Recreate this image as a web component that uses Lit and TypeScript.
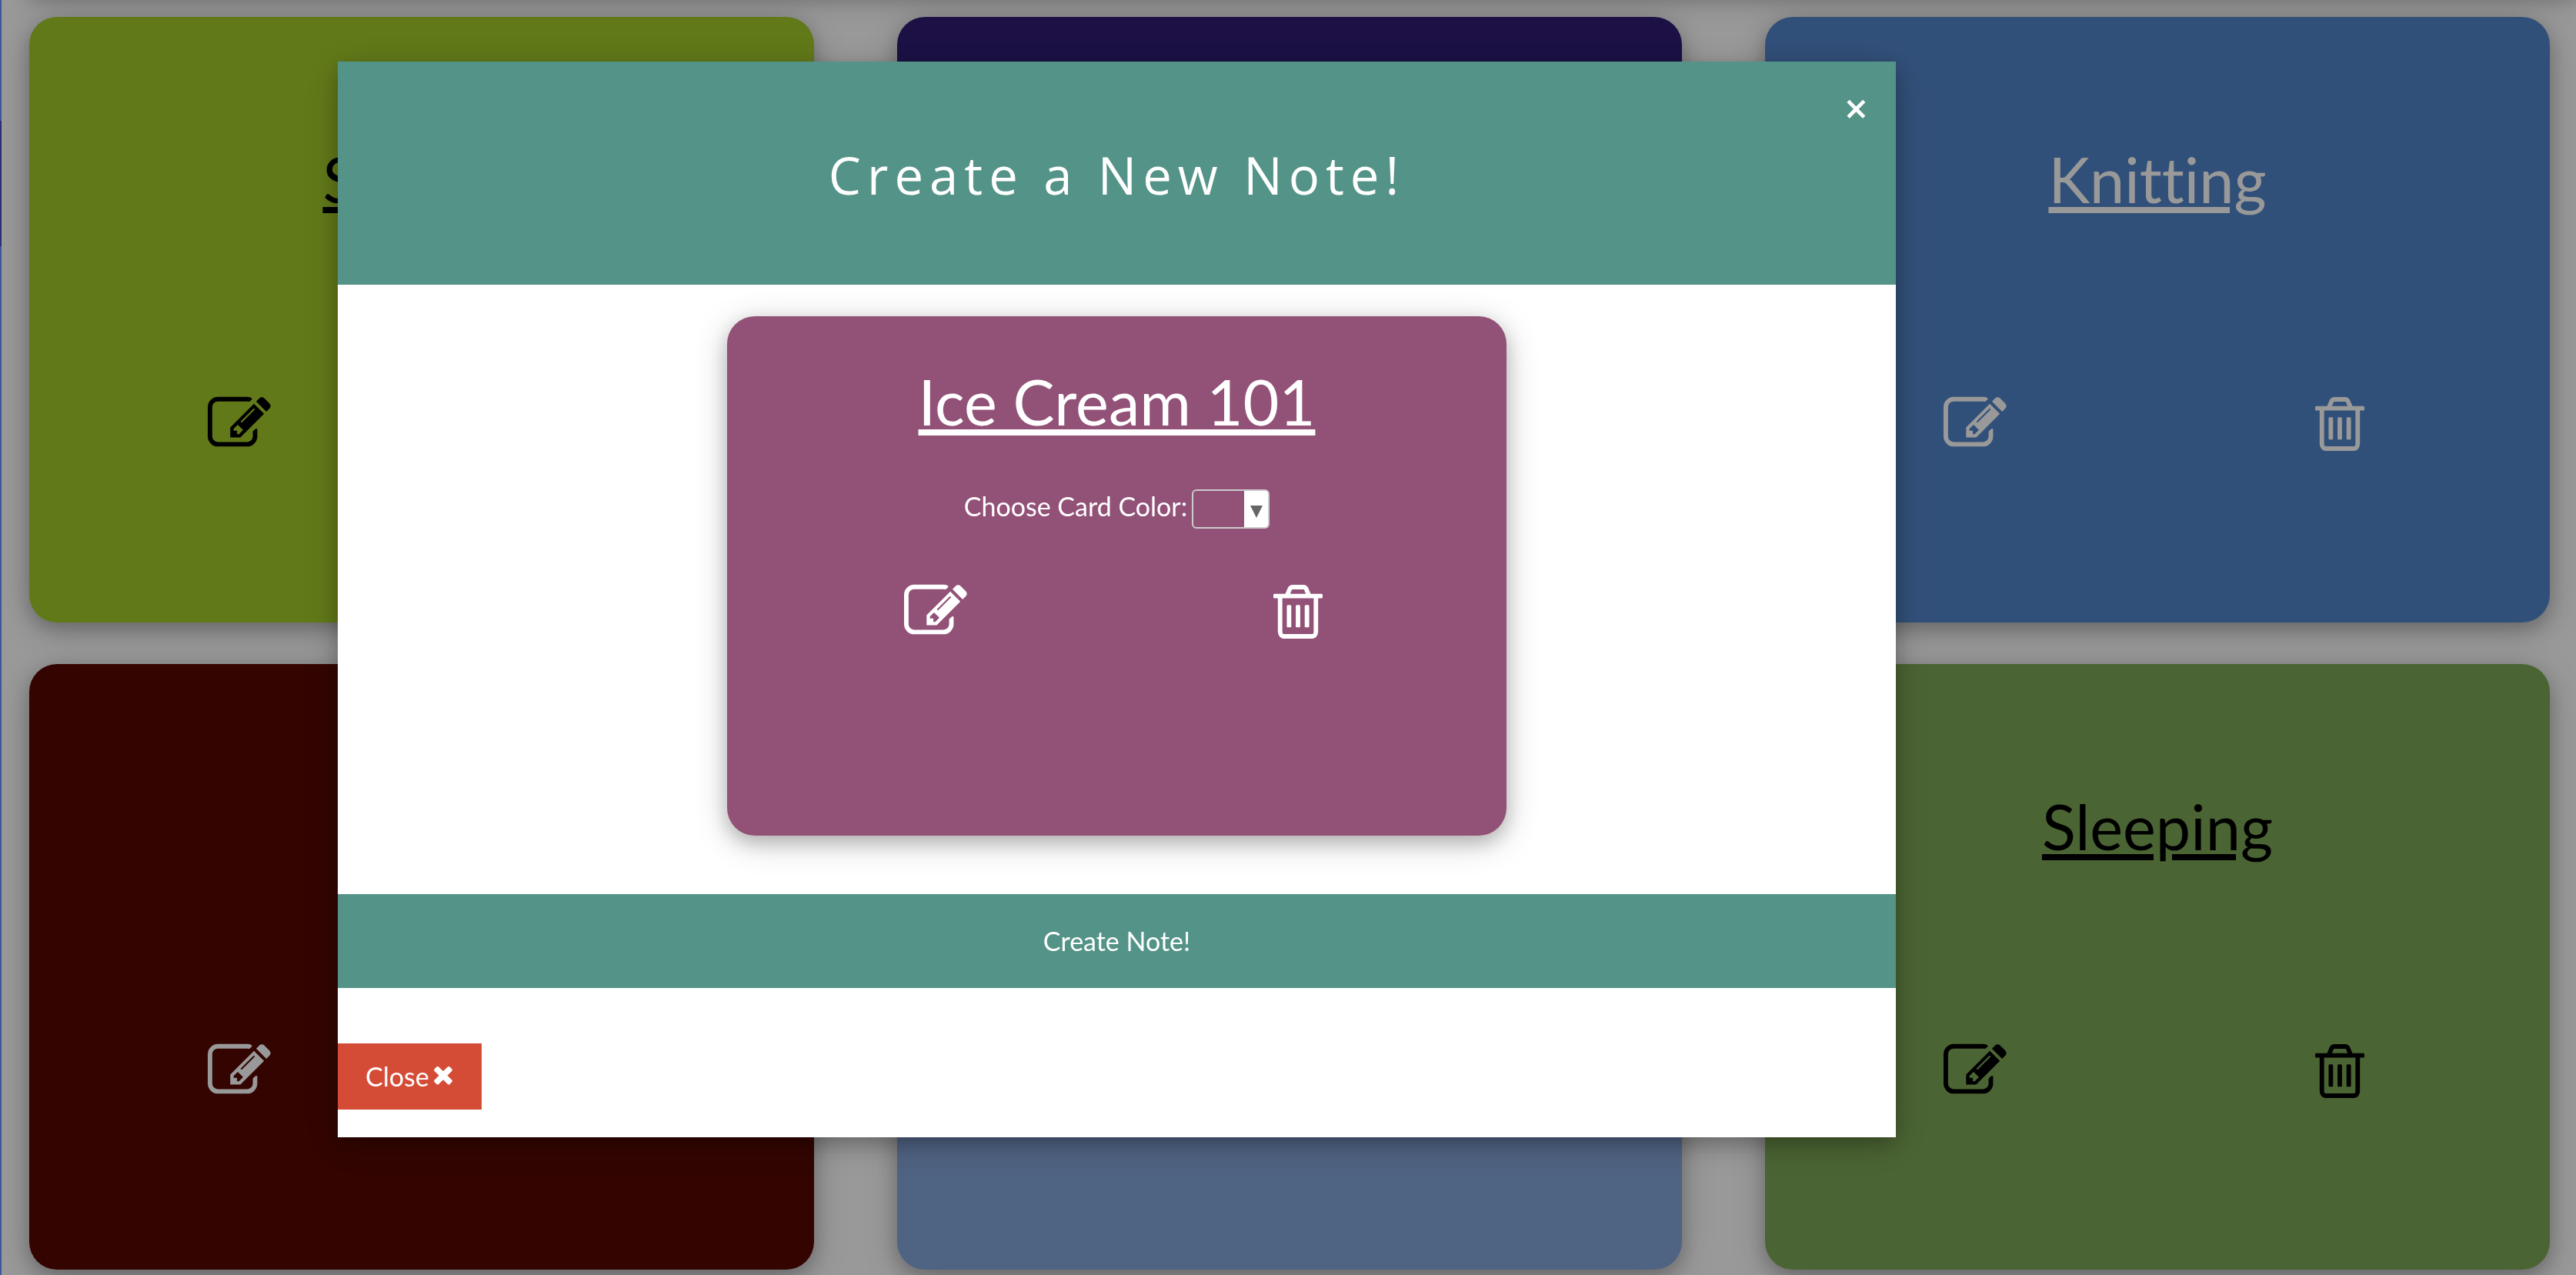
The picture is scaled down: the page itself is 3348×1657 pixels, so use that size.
import { LitElement, html, css, svg } from "lit";
import { customElement, property, state } from "lit/decorators.js";
import { styleMap } from "lit/directives/style-map.js";

const editIcon = html`<svg class="icon edit" viewBox="0 0 1792 1792" aria-hidden="true">
  ${svg`<path d="M888 1184l116-116-152-152-116 116v56h96v96h56zm440-720q-16-16-33 1l-350 350q-17 17-1 33t33-1l350-350q17-17 1-33zm80 594v190q0 119-84.5 203.5t-203.5 84.5h-832q-119 0-203.5-84.5t-84.5-203.5v-832q0-119 84.5-203.5t203.5-84.5h832q63 0 117 25 15 7 18 23 3 17-9 29l-49 49q-14 14-32 8-23-6-45-6h-832q-66 0-113 47t-47 113v832q0 66 47 113t113 47h832q66 0 113-47t47-113v-126q0-13 9-22l64-64q15-15 35-7t20 29zm-96-738l288 288-672 672h-288v-288zm444 132l-92 92-288-288 92-92q28-28 68-28t68 28l152 152q28 28 28 68t-28 68z"/>`}
</svg>`;

const trashIcon = html`<svg class="icon trash" viewBox="192 0 1408 1792" aria-hidden="true">
  ${svg`<path d="M704 736v576q0 14-9 23t-23 9h-64q-14 0-23-9t-9-23v-576q0-14 9-23t23-9h64q14 0 23 9t9 23zm256 0v576q0 14-9 23t-23 9h-64q-14 0-23-9t-9-23v-576q0-14 9-23t23-9h64q14 0 23 9t9 23zm256 0v576q0 14-9 23t-23 9h-64q-14 0-23-9t-9-23v-576q0-14 9-23t23-9h64q14 0 23 9t9 23zm128 724v-948h-896v948q0 22 7 40.5t14.5 27 10.5 8.5h832q3 0 10.5-8.5t14.5-27 7-40.5zm-672-1076h448l-48-117q-7-9-17-11h-317q-10 2-17 11zm928 32v64q0 14-9 23t-23 9h-96v948q0 83-47 143.5t-113 60.5h-832q-66 0-113-58.5t-47-141.5v-952h-96q-14 0-23-9t-9-23v-64q0-14 9-23t23-9h309l70-167q15-37 54-63t79-26h320q40 0 79 26t54 63l70 167h309q14 0 23 9t9 23z"/>`}
</svg>`;

const timesIcon = html`<svg class="times" viewBox="192 128 1408 1792" aria-hidden="true">
  ${svg`<path d="M1490 1322q0 40-28 68l-136 136q-28 28-68 28t-68-28l-294-294-294 294q-28 28-68 28t-68-28l-136-136q-28-28-28-68t28-68l294-294-294-294q-28-28-28-68t28-68l136-136q28-28 68-28t68 28l294 294 294-294q28-28 68-28t68 28l136 136q28 28 28 68t-28 68l-294 294 294 294q28 28 28 68z"/>`}
</svg>`;

interface Note {
  title: string;
  background: string;
  color: string;
}

const NOTES: Note[] = [
  { title: "Singing", background: "#a3ca2a", color: "#000000" },
  { title: "", background: "#2f1c73", color: "#ffffff" },
  { title: "Knitting", background: "#5385ca", color: "#ffffff" },
  { title: "", background: "#550800", color: "#ffffff" },
  { title: "", background: "#84a5d9", color: "#000000" },
  { title: "Sleeping", background: "#7da755", color: "#000000" },
];

@customElement("note-card")
export class NoteCard extends LitElement {
  @property() title = "";
  @property({ type: Boolean, reflect: true }) compact = false;

  static styles = css`
    :host {
      display: flex;
      flex-direction: column;
      align-items: center;
      box-sizing: border-box;
      min-height: 787px;
      padding: 151px 36px 36px;
      border-radius: 36px;
      box-shadow: 0 9px 23px rgba(0, 0, 0, 0.2), 0 9px 45px rgba(0, 0, 0, 0.19);
      font-family: Lato, "Liberation Sans", sans-serif;
      font-variant-ligatures: none;
    }
    :host([compact]) {
      min-height: 675px;
      padding-top: 51px;
    }
    .title {
      margin: 0;
      min-height: 120px;
      font-size: 81px;
      font-weight: 400;
      line-height: 120px;
      text-decoration: underline;
    }
    .middle {
      display: flex;
      justify-content: center;
      align-items: flex-start;
      width: 100%;
      min-height: 217px;
    }
    :host([compact]) .middle {
      box-sizing: border-box;
      min-height: 172px;
      padding-top: 54px;
    }
    .actions {
      display: grid;
      grid-template-columns: 1fr 1fr;
      width: 100%;
      justify-items: center;
    }
    button {
      display: block;
      padding: 0;
      border: 0;
      background: none;
      color: inherit;
      cursor: pointer;
    }
    .icon {
      display: block;
      height: 82px;
      fill: currentColor;
    }
    .edit {
      width: 82px;
    }
    .trash {
      width: 64px;
    }
  `;

  render() {
    return html`
      <h2 class="title">${this.title}</h2>
      <div class="middle"><slot></slot></div>
      <div class="actions">
        <button type="button" aria-label="Edit note">${editIcon}</button>
        <button type="button" aria-label="Delete note">${trashIcon}</button>
      </div>
    `;
  }
}

@customElement("app-root")
export class AppRoot extends LitElement {
  @state() private cardColor = "#925177";

  static styles = css`
    :host {
      display: block;
      height: 100vh;
      overflow: hidden;
      background: #ffffff;
      color: #000000;
      font-family: Lato, "Liberation Sans", sans-serif;
      font-size: 34px;
      font-variant-ligatures: none;
      line-height: 50px;
    }
    .page {
      display: flex;
      min-height: 100%;
    }
    .sidebar {
      position: relative;
      z-index: 2;
      display: flex;
      flex-direction: column;
      width: 2px;
      padding-top: 157px;
      box-sizing: border-box;
      background: #3b5998;
    }
    .sidebar-active {
      height: 163px;
      background: #2b2e6f;
    }
    .main {
      flex: 1;
    }
    .topbar {
      height: 60px;
      margin: -72px 0 12px 36px;
      box-shadow: 0 9px 23px rgba(0, 0, 0, 0.2), 0 9px 45px rgba(0, 0, 0, 0.19);
    }
    .board {
      display: grid;
      grid-template-columns: repeat(3, 1fr);
      gap: 54px 108px;
      padding: 22px 34px 54px 36px;
    }
    .overlay {
      position: fixed;
      inset: 0;
      z-index: 1;
      display: grid;
      grid-template-columns: 439fr 2025fr 884fr;
      align-items: start;
      padding-top: 80px;
      background: rgba(0, 0, 0, 0.4);
    }
    .modal {
      position: relative;
      grid-column: 2;
      display: flex;
      flex-direction: column;
      background: #ffffff;
      color: #ffffff;
      box-shadow: 0 9px 23px rgba(0, 0, 0, 0.2), 0 9px 45px rgba(0, 0, 0, 0.19);
    }
    .modal-header {
      display: flex;
      justify-content: center;
      padding: 96px 36px 92px;
      background: #549387;
    }
    .modal-title {
      margin: 0;
      font-family: "Open Sans", "Noto Sans", sans-serif;
      font-size: 67px;
      font-weight: 400;
      letter-spacing: 8px;
      line-height: 102px;
    }
    button {
      border: 0;
      color: inherit;
      font: inherit;
      cursor: pointer;
    }
    .dismiss {
      position: absolute;
      top: 0;
      right: 0;
      padding: 20px 36px;
      background: none;
      font-family: "Open Sans", "Noto Sans", sans-serif;
      font-size: 54px;
      font-weight: 600;
      line-height: 81px;
    }
    .modal-body {
      display: grid;
      grid-template-columns: 1fr 2fr 1fr;
      padding: 41px 0 76px;
    }
    .preview {
      grid-column: 2;
    }
    .picker {
      display: flex;
      gap: 6px;
      line-height: 44px;
    }
    .select-wrap {
      position: relative;
      display: flex;
    }
    .color-select {
      appearance: none;
      width: 101px;
      height: 51px;
      border: 2px solid #cccccc;
      border-radius: 6px;
      background: linear-gradient(#ffffff, #ffffff) right / 31px 100% no-repeat;
      color: transparent;
      font: inherit;
    }
    .arrow {
      position: absolute;
      right: 9px;
      top: 21px;
      width: 16px;
      height: 16px;
      fill: #666666;
      pointer-events: none;
    }
    .create {
      padding: 36px;
      background: #549387;
    }
    .modal-footer {
      display: flex;
      padding: 72px 0 36px;
    }
    .close {
      display: flex;
      align-items: center;
      gap: 4px;
      padding: 18px 36px;
      background: #d54c36;
    }
    .times {
      width: 28px;
      height: 36px;
      fill: currentColor;
    }
  `;

  private pickColor(event: Event) {
    this.cardColor = (event.target as HTMLSelectElement).value;
  }

  render() {
    return html`
      <div class="page">
        <nav class="sidebar" aria-label="Sections"><div class="sidebar-active"></div></nav>
        <main class="main">
          <div class="topbar"></div>
          <div class="board">
            ${NOTES.map(
              (note) => html`<note-card
                .title=${note.title}
                style=${styleMap({ background: note.background, color: note.color })}
              ></note-card>`
            )}
          </div>
        </main>
      </div>
      <div class="overlay">
        <section class="modal" role="dialog" aria-labelledby="modal-title">
          <header class="modal-header">
            <h1 class="modal-title" id="modal-title">Create a New Note!</h1>
            <button class="dismiss" type="button" aria-label="Dismiss">×</button>
          </header>
          <div class="modal-body">
            <note-card
              class="preview"
              compact
              .title=${"Ice Cream 101"}
              style=${styleMap({ background: this.cardColor })}
            >
              <div class="picker">
                <label for="card-color">Choose Card Color:</label>
                <span class="select-wrap">
                  <select class="color-select" id="card-color" @change=${this.pickColor}>
                    <option value="#925177"></option>
                    <option value="#549387"></option>
                    <option value="#5385ca"></option>
                  </select>
                  <svg class="arrow" viewBox="0 0 16 16" aria-hidden="true"><path d="M0 0h16L8 16z" /></svg>
                </span>
              </div>
            </note-card>
          </div>
          <button class="create" type="button">Create Note!</button>
          <footer class="modal-footer">
            <button class="close" type="button">Close ${timesIcon}</button>
          </footer>
        </section>
      </div>
    `;
  }
}
